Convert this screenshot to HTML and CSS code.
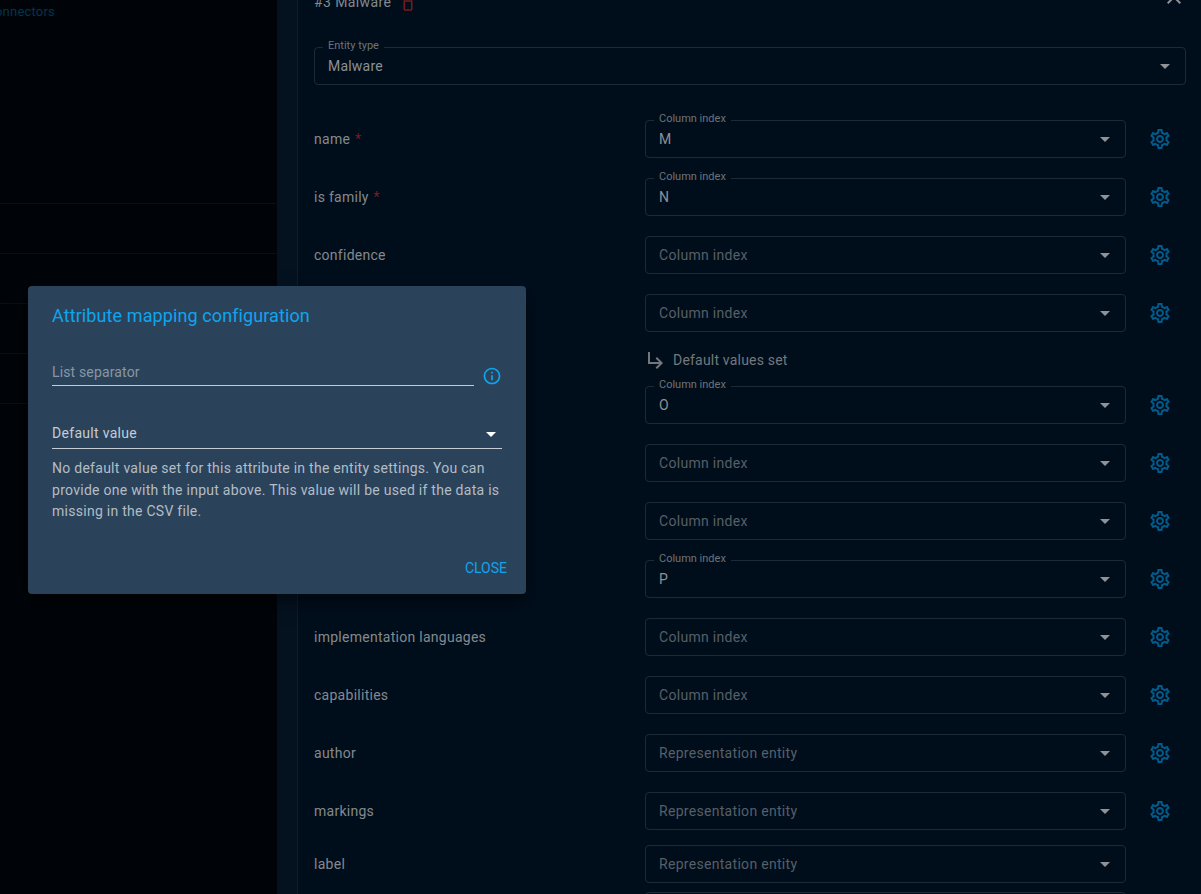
FILE: index.html
```html
<!DOCTYPE html>
<html lang="en">

<head>
    <meta charset="UTF-8">
    <title>Attribute mapping configuration</title>
    <link rel="stylesheet" href="styles.css">
</head>

<body>
    <svg class="sprites" aria-hidden="true">
        <symbol id="gear" viewBox="0 0 24 24"><path d="M19.43 12.98c.04-.32.07-.64.07-.98 0-.34-.03-.66-.07-.98l2.11-1.65c.19-.15.24-.42.12-.64l-2-3.46c-.09-.16-.26-.25-.44-.25-.06 0-.12.01-.17.03l-2.49 1c-.52-.4-1.08-.73-1.69-.98l-.38-2.65C14.46 2.18 14.25 2 14 2h-4c-.25 0-.46.18-.49.42l-.38 2.65c-.61.25-1.17.59-1.69.98l-2.49-1c-.06-.02-.12-.03-.18-.03-.17 0-.34.09-.43.25l-2 3.46c-.13.22-.07.49.12.64l2.11 1.65c-.04.32-.07.65-.07.98 0 .33.03.66.07.98l-2.11 1.65c-.19.15-.24.42-.12.64l2 3.46c.09.16.26.25.44.25.06 0 .12-.01.17-.03l2.49-1c.52.4 1.08.73 1.69.98l.38 2.65c.03.24.24.42.49.42h4c.25 0 .46-.18.49-.42l.38-2.65c.61-.25 1.17-.59 1.69-.98l2.49 1c.06.02.12.03.18.03.17 0 .34-.09.43-.25l2-3.46c.12-.22.07-.49-.12-.64l-2.11-1.65zm-1.98-1.71c.04.31.05.52.05.73 0 .21-.02.43-.05.73l-.14 1.13.89.7 1.08.84-.7 1.21-1.27-.51-1.04-.42-.9.68c-.43.32-.84.56-1.25.73l-1.06.43-.16 1.13-.2 1.35h-1.4l-.19-1.35-.16-1.13-1.06-.43c-.43-.18-.83-.41-1.23-.71l-.91-.7-1.06.43-1.27.51-.7-1.21 1.08-.84.89-.7-.14-1.13c-.03-.31-.05-.54-.05-.74s.02-.43.05-.73l.14-1.13-.89-.7-1.08-.84.7-1.21 1.27.51 1.04.42.9-.68c.43-.32.84-.56 1.25-.73l1.06-.43.16-1.13.2-1.35h1.39l.19 1.35.16 1.13 1.06.43c.43.18.83.41 1.23.71l.91.7 1.06-.43 1.27-.51.7 1.21-1.07.85-.89.7.14 1.13zM12 8c-2.21 0-4 1.79-4 4s1.79 4 4 4 4-1.79 4-4-1.79-4-4-4zm0 6c-1.1 0-2-.9-2-2s.9-2 2-2 2 .9 2 2-.9 2-2 2z"/></symbol>
    </svg>

    <div class="page">
        <aside class="side">
            <div class="crumb">connectors</div>
            <div class="side-rows">
                <div class="side-row"></div>
                <div class="side-row"></div>
                <div class="side-row"></div>
                <div class="side-row"></div>
                <div class="side-row"></div>
            </div>
        </aside>

        <div class="strip"></div>

        <main class="panel">
            <div class="panel-head">
                <span class="panel-title">#3 Malware</span>
                <svg class="icon-trash" viewBox="0 0 24 24"><path d="M6 19c0 1.1.9 2 2 2h8c1.1 0 2-.9 2-2V7H6v12zM8 9h8v10H8V9zm7.5-5-1-1h-5l-1 1H5v2h14V4z"/></svg>
                <svg class="icon-close" viewBox="0 0 24 24"><path d="M19 6.41 17.59 5 12 10.59 6.41 5 5 6.41 10.59 12 5 17.59 6.41 19 12 13.41 17.59 19 19 17.59 13.41 12z"/></svg>
            </div>

            <div class="select select-wide">
                <span class="float-label">Entity type</span>
                <span class="select-value">Malware</span>
                <span class="caret"></span>
            </div>

            <div class="rows">
                <div class="row">
                    <div class="row-label">name <span class="req">*</span></div>
                    <div class="select"><span class="float-label">Column index</span><span class="select-value">M</span><span class="caret"></span></div>
                    <svg class="gear"><use href="#gear"/></svg>
                </div>
                <div class="row">
                    <div class="row-label">is family <span class="req">*</span></div>
                    <div class="select"><span class="float-label">Column index</span><span class="select-value">N</span><span class="caret"></span></div>
                    <svg class="gear"><use href="#gear"/></svg>
                </div>
                <div class="row">
                    <div class="row-label">confidence</div>
                    <div class="select"><span class="placeholder">Column index</span><span class="caret"></span></div>
                    <svg class="gear"><use href="#gear"/></svg>
                </div>
                <div class="row">
                    <div class="row-label"></div>
                    <div class="select"><span class="placeholder">Column index</span><span class="caret"></span></div>
                    <svg class="gear"><use href="#gear"/></svg>
                </div>
                <div class="defaults-note">
                    <svg class="icon-sub" viewBox="0 0 24 24"><path d="m19 15-6 6-1.42-1.42L15.17 16H4V4h2v10h9.17l-3.59-3.58L13 9l6 6z"/></svg>
                    <span>Default values set</span>
                </div>
                <div class="row">
                    <div class="row-label"></div>
                    <div class="select"><span class="float-label">Column index</span><span class="select-value">O</span><span class="caret"></span></div>
                    <svg class="gear"><use href="#gear"/></svg>
                </div>
                <div class="row">
                    <div class="row-label"></div>
                    <div class="select"><span class="placeholder">Column index</span><span class="caret"></span></div>
                    <svg class="gear"><use href="#gear"/></svg>
                </div>
                <div class="row">
                    <div class="row-label"></div>
                    <div class="select"><span class="placeholder">Column index</span><span class="caret"></span></div>
                    <svg class="gear"><use href="#gear"/></svg>
                </div>
                <div class="row">
                    <div class="row-label"></div>
                    <div class="select"><span class="float-label">Column index</span><span class="select-value">P</span><span class="caret"></span></div>
                    <svg class="gear"><use href="#gear"/></svg>
                </div>
                <div class="row">
                    <div class="row-label">implementation languages</div>
                    <div class="select"><span class="placeholder">Column index</span><span class="caret"></span></div>
                    <svg class="gear"><use href="#gear"/></svg>
                </div>
                <div class="row">
                    <div class="row-label">capabilities</div>
                    <div class="select"><span class="placeholder">Column index</span><span class="caret"></span></div>
                    <svg class="gear"><use href="#gear"/></svg>
                </div>
                <div class="row">
                    <div class="row-label">author</div>
                    <div class="select"><span class="placeholder">Representation entity</span><span class="caret"></span></div>
                    <svg class="gear"><use href="#gear"/></svg>
                </div>
                <div class="row">
                    <div class="row-label">markings</div>
                    <div class="select"><span class="placeholder">Representation entity</span><span class="caret"></span></div>
                    <svg class="gear"><use href="#gear"/></svg>
                </div>
                <div class="row row-tight">
                    <div class="row-label">label</div>
                    <div class="select"><span class="placeholder">Representation entity</span><span class="caret"></span></div>
                </div>
                <div class="row">
                    <div class="row-label"></div>
                    <div class="select"></div>
                </div>
            </div>
        </main>
    </div>

    <div class="dialog">
        <h2 class="dialog-title">Attribute mapping configuration</h2>

        <div class="separator-line">
            <div class="text-field">List separator</div>
            <svg class="icon-info" viewBox="0 0 24 24"><path d="M11 7h2v2h-2zm0 4h2v6h-2zm1-9C6.48 2 2 6.48 2 12s4.48 10 10 10 10-4.48 10-10S17.52 2 12 2zm0 18c-4.41 0-8-3.59-8-8s3.59-8 8-8 8 3.59 8 8-3.59 8-8 8z"/></svg>
        </div>

        <div class="default-field">
            <span>Default value</span>
            <span class="caret caret-white"></span>
        </div>

        <p class="dialog-help">No default value set for this attribute in the entity settings. You can provide one with the input above. This value will be used if the data is missing in the CSV file.</p>

        <div class="dialog-actions">
            <button class="btn-close">Close</button>
        </div>
    </div>
</body>

</html>
```

FILE: styles.css
```css
html,
body {
    margin: 0;
    height: 894px;
    overflow: hidden;
}

body {
    font-family: "Roboto", "Noto Sans", sans-serif;
    background: #000408;
    color: #8a8e92;
}

.sprites {
    display: none;
}

.page {
    display: flex;
    height: 894px;
}

/* left side, behind the backdrop */
.side {
    width: 277px;
    flex-shrink: 0;
    overflow: hidden;
    background: #000408;
}

.crumb {
    margin: 4px 0 0 -12px;
    height: 16px;
    font-size: 13px;
    line-height: 16px;
    letter-spacing: 0.2px;
    color: #03344d;
}

.side-rows {
    margin-top: 183px;
}

.side-row {
    height: 49px;
    border-top: 1px solid #0a0f14;
}

.strip {
    width: 20px;
    flex-shrink: 0;
    background: #041220;
}

.panel {
    flex: 1;
    padding: 0 15px 0 16px;
    background: #000e1c;
    border-left: 1px solid #0e1c2b;
}

.panel-head {
    display: flex;
    align-items: center;
    height: 24px;
    margin-top: -10px;
    margin-bottom: 33px;
    font-size: 14px;
}

.panel-title {
    color: #85898d;
    letter-spacing: 0.4px;
}

.icon-trash {
    width: 18px;
    height: 18px;
    margin-left: 8px;
    margin-top: 3px;
    fill: #7a1a1e;
}

.icon-close {
    width: 24px;
    height: 24px;
    margin-left: auto;
    margin-top: -11px;
    fill: #8f9296;
}

/* selects */
.select {
    position: relative;
    display: flex;
    align-items: center;
    box-sizing: border-box;
    width: 481px;
    height: 38px;
    padding: 0 13px;
    border: 1px solid #1b2a39;
    border-radius: 4px;
    font-size: 14px;
}

.select-wide {
    width: 872px;
    margin-bottom: 35px;
}

.select-value {
    color: #8d9094;
    letter-spacing: 0.2px;
}

.placeholder {
    color: #575f67;
    letter-spacing: 0.3px;
}

.float-label {
    position: absolute;
    top: -8px;
    left: 8px;
    padding: 0 5px;
    font-size: 11px;
    line-height: 12px;
    color: #6d7378;
    background: #000e1c;
}

.caret {
    margin-left: auto;
    margin-right: 2px;
    width: 0;
    height: 0;
    border-left: 5px solid transparent;
    border-right: 5px solid transparent;
    border-top: 5px solid #8f9296;
}

.rows {
    display: flex;
    flex-direction: column;
}

.row {
    display: flex;
    align-items: center;
    margin-bottom: 20px;
}

.row-tight {
    margin-top: -5px;
    margin-bottom: 9px;
}

.row-label {
    width: 331px;
    flex-shrink: 0;
    font-size: 14px;
    letter-spacing: 0.27px;
    color: #85898d;
}

.req {
    margin-left: 1px;
    color: #7a1a1e;
}

.gear {
    width: 24px;
    height: 24px;
    margin-left: 22px;
    fill: #005a8a;
}

.defaults-note {
    display: flex;
    align-items: center;
    height: 24px;
    margin: -4px 0 14px 330px;
    font-size: 14px;
    color: #74787c;
    letter-spacing: 0.2px;
}

.icon-sub {
    width: 24px;
    height: 24px;
    margin-right: 5px;
    fill: #74787c;
}

/* dialog on top of the backdrop */
.dialog {
    position: absolute;
    left: 28px;
    top: 286px;
    box-sizing: border-box;
    width: 498px;
    height: 308px;
    padding: 0 19px 0 24px;
    background: #2a435b;
    border-radius: 4px;
    box-shadow: 0 8px 20px rgba(0, 0, 0, 0.5);
}

.dialog-title {
    margin: 18px 0 0;
    font-size: 18px;
    font-weight: 400;
    line-height: 24px;
    letter-spacing: 0.1px;
    color: #0fa5ee;
}

.separator-line {
    display: flex;
    align-items: center;
    margin-top: 32px;
}

.text-field {
    box-sizing: border-box;
    width: 422px;
    height: 26px;
    padding-top: 2px;
    border-bottom: 1px solid #c5ccd3;
    font-size: 14px;
    line-height: 20px;
    letter-spacing: 0.15px;
    color: #8996a3;
}

.icon-info {
    width: 20px;
    height: 20px;
    margin-left: 8px;
    margin-top: 5px;
    fill: #0fa5ee;
}

.default-field {
    display: flex;
    align-items: center;
    box-sizing: border-box;
    width: 450px;
    height: 32px;
    margin-top: 31px;
    padding-top: 1px;
    padding-bottom: 1px;
    border-bottom: 1px solid #c5ccd3;
    font-size: 14px;
    letter-spacing: 0.3px;
    color: #c5ccd3;
}

.caret-white {
    margin-right: 6px;
    margin-top: 4px;
    border-top-color: #ffffff;
}

.dialog-help {
    margin: 9px 0 0;
    width: 455px;
    font-size: 14px;
    line-height: 21.5px;
    letter-spacing: 0.27px;
    color: #b4bcc5;
}

.dialog-actions {
    display: flex;
    justify-content: flex-end;
    margin-top: 35px;
}

.btn-close {
    padding: 0;
    border: none;
    background: none;
    font-family: inherit;
    font-size: 14px;
    line-height: 20px;
    text-transform: uppercase;
    color: #0fa5ee;
}
```
